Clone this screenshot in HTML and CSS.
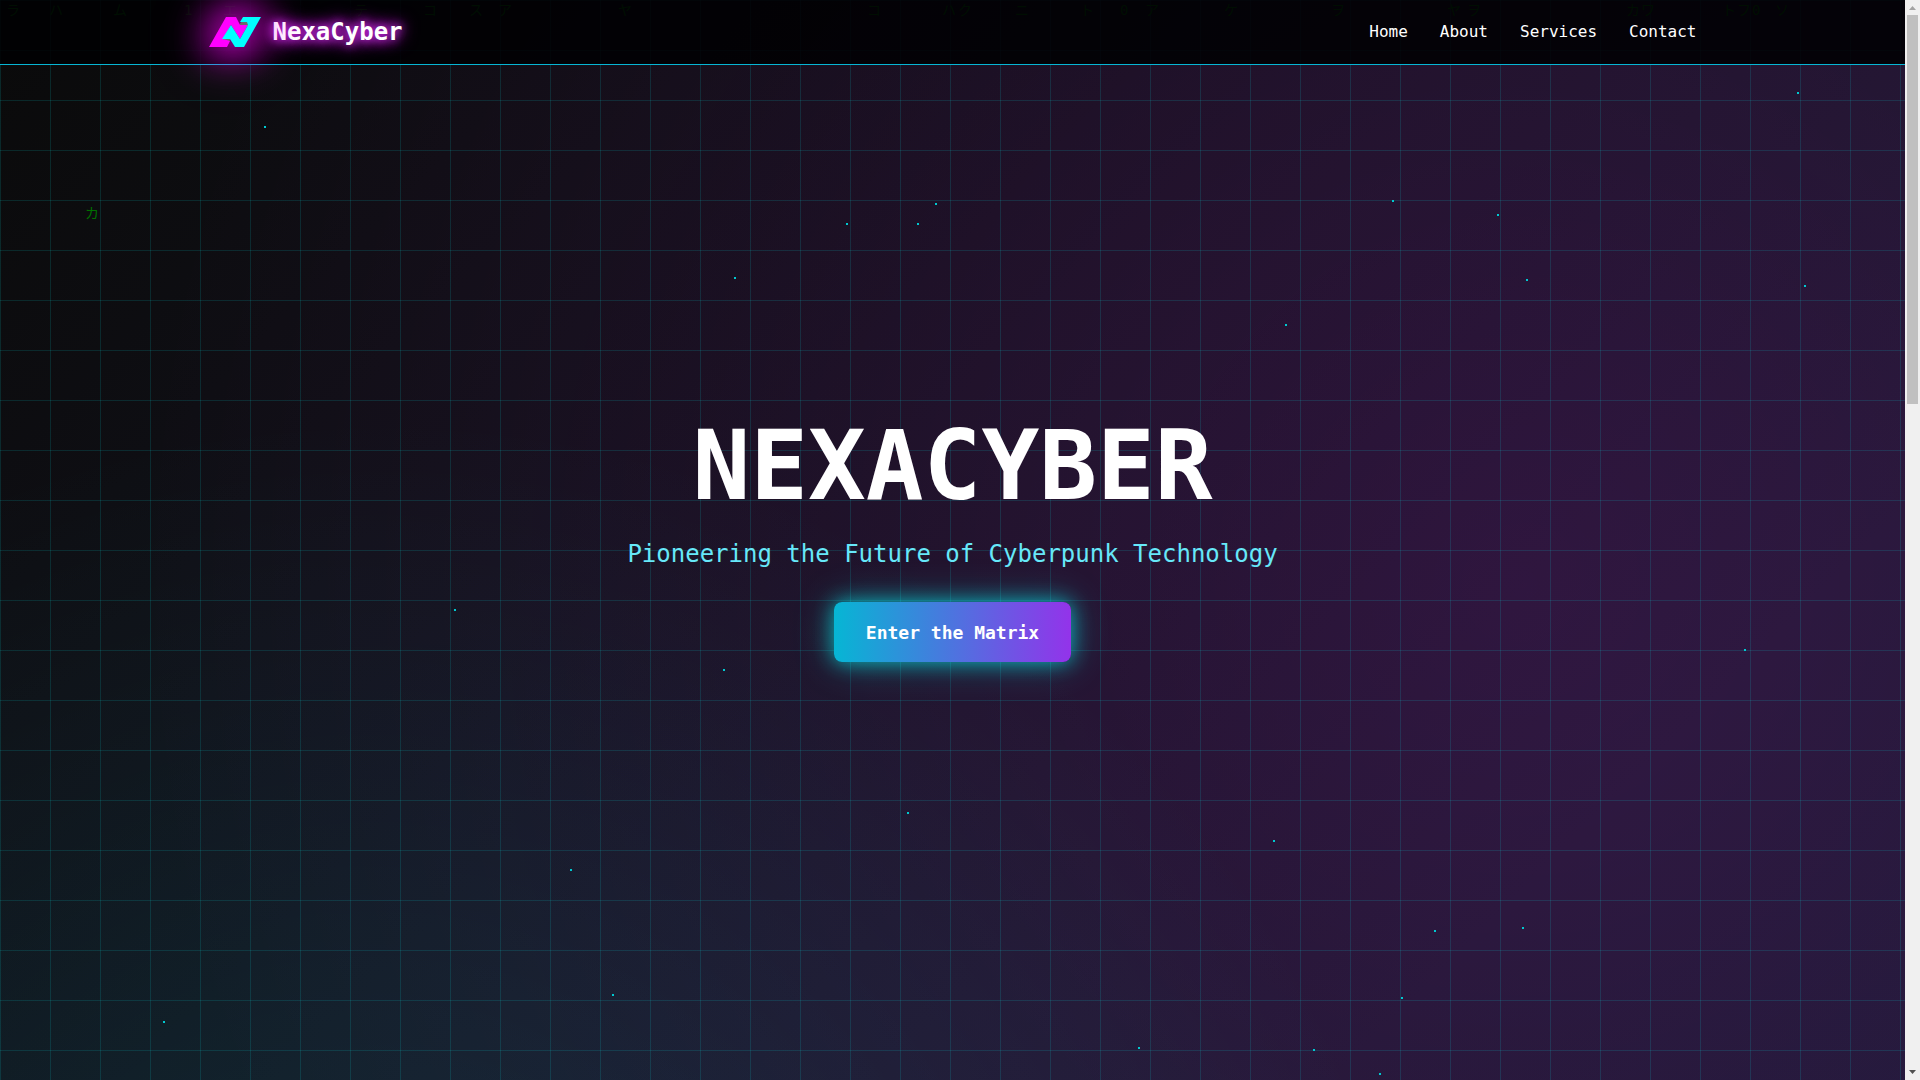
FILE: index.html
```html
<!DOCTYPE html>
<html lang="en">
<head>
    <meta charset="UTF-8">
    <meta name="viewport" content="width=device-width, initial-scale=1.0">
    <title>NexaCyber</title>
    <link rel="stylesheet" href="styles.css">
</head>
<body>
    <div class="page">
        <div class="cyber-grid"></div>
        <div class="matrix-rain" id="matrix-rain" aria-hidden="true"></div>
        <div class="particles" id="particles" aria-hidden="true"></div>

        <header class="navbar">
            <div class="nav-inner">
                <a class="brand" href="#home">
                    <svg class="logo" viewBox="0 0 52 30" aria-hidden="true">
                        <path fill="#6b6b6b" d="M30 8l3-4 7 1-1 4zM13 21l9 0-3 6z"/>
                        <path fill="#ff00ff" d="M0 30L17 0h10l4 8h8l-8 14-9-14-8 14 7 2-3 6z"/>
                        <path fill="#00ffff" d="M34 0h18L35 30h-9l-5-8h-8l9-14 9 14 8-14-1-3h-7z"/>
                    </svg>
                    <span class="brand-name">NexaCyber</span>
                </a>
                <nav class="nav-links">
                    <a href="#home">Home</a>
                    <a href="#about">About</a>
                    <a href="#services">Services</a>
                    <a href="#contact">Contact</a>
                </nav>
            </div>
        </header>

        <main class="hero" id="home">
            <h1>NEXACYBER</h1>
            <p class="tagline">Pioneering the Future of Cyberpunk Technology</p>
            <button class="enter-btn" type="button">Enter the Matrix</button>
        </main>
    </div>

    <div class="scrollbar" aria-hidden="true">
        <svg class="arrow" viewBox="0 0 15 15"><path fill="#a3a3a3" d="M4 10l3.500-4 3.500 4z"/></svg>
        <div class="track"><div class="thumb"></div></div>
        <svg class="arrow" viewBox="0 0 15 15"><path fill="#505050" d="M4 5l3.500 4L11 5z"/></svg>
    </div>

    <script src="script.js"></script>
</body>
</html>
```
FILE: styles.css
```css
* {
    margin: 0;
    padding: 0;
    box-sizing: border-box;
}

body {
    display: flex;
    height: 100vh;
    overflow: hidden;
    background: #0a0a0a;
    color: white;
    font-family: "DejaVu Sans Mono", "Noto Sans CJK JP", monospace;
}

.page {
    position: relative;
    flex: 1;
    display: flex;
    flex-direction: column;
    overflow: hidden;
    background:
        radial-gradient(circle at 20% 50%, rgba(0, 255, 255, 0.1) 0%, transparent 50%),
        radial-gradient(circle at 80% 20%, rgba(255, 0, 255, 0.1) 0%, transparent 50%),
        linear-gradient(135deg, #0a0a0a 0%, #1a1a2e 50%, #16213e 100%);
    background-size: 100% 271vh;
}

.cyber-grid,
.matrix-rain,
.particles {
    position: absolute;
    inset: 0;
}

.cyber-grid {
    background-image:
        linear-gradient(rgba(0, 255, 255, 0.12) 1px, transparent 1px),
        linear-gradient(90deg, rgba(0, 255, 255, 0.12) 1px, transparent 1px);
    background-size: 50px 50px;
}

.matrix-rain span {
    position: absolute;
    color: #007000;
    font-size: 14px;
    line-height: 16px;
}

.particles i {
    position: absolute;
    width: 2px;
    height: 2px;
    background: #00c8d0;
}

/* Navigation */
.navbar {
    position: absolute;
    top: 0;
    left: 0;
    right: 0;
    z-index: 10;
    background: rgba(0, 0, 2, 0.88);
    border-bottom: 1px solid #06b6d4;
}

.nav-inner {
    display: flex;
    align-items: center;
    justify-content: space-between;
    max-width: 1536px;
    height: 64px;
    margin: 0 auto;
    padding: 0 24px;
}

.brand {
    display: flex;
    align-items: center;
    gap: 12px;
    color: white;
    text-decoration: none;
}

.logo {
    width: 52px;
    height: 30px;
    filter: drop-shadow(0 0 20px #ff00ff) drop-shadow(0 0 20px rgba(255, 0, 255, 0.7));
    overflow: visible;
}

.brand-name {
    font-size: 24px;
    line-height: 32px;
    font-weight: bold;
    text-shadow: 0 0 10px #d028f0, 0 0 15px #c026d3, 0 0 20px #c026d3;
}

.nav-links {
    display: flex;
    gap: 32px;
}

.nav-links a {
    color: white;
    font-size: 16px;
    line-height: 24px;
    text-decoration: none;
}

/* Hero */
.hero {
    position: relative;
    flex: 1;
    display: flex;
    flex-direction: column;
    align-items: center;
    justify-content: center;
}

h1 {
    font-size: 96px;
    line-height: 96px;
    margin-bottom: 24px;
}

.tagline {
    color: #67e8f9;
    font-size: 24px;
    line-height: 32px;
    margin-bottom: 32px;
}

.enter-btn {
    height: 60px;
    padding: 0 32px;
    border: none;
    border-radius: 8px;
    background: linear-gradient(90deg, #06b6d4, #9333ea);
    box-shadow: 0 0 20px rgba(0, 255, 255, 0.6), 0 0 40px rgba(0, 255, 255, 0.3);
    color: white;
    font-family: inherit;
    font-size: 18px;
    font-weight: bold;
    cursor: pointer;
}

/* Scrollbar */
.scrollbar {
    display: flex;
    flex-direction: column;
    align-items: center;
    width: 15px;
    background: #f0f0f0;
}

.track {
    flex: 1;
    width: 11px;
}

.thumb {
    height: 37%;
    background: #c0c0c0;
}

.arrow {
    width: 15px;
    height: 15px;
}
```
FILE: script.js
```js
// x, y of each floating particle
const particles = [
    [264, 126], [1797, 92], [935, 203], [846, 223], [917, 223],
    [1392, 200], [1497, 214], [734, 277], [1526, 279], [1804, 285],
    [1285, 324], [454, 609], [723, 669], [1744, 649], [907, 812],
    [1273, 840], [570, 869], [1434, 930], [1522, 927], [1401, 997],
    [612, 994], [163, 1021], [1138, 1047], [1313, 1049], [1379, 1073]
];

// falling characters: x, y, glyph
const drops = [
    [85, 205, "カ"], [6, 2, "ラ"], [49, 2, "ハ"], [113, 2, "ム"], [184, 2, "1"],
    [223, 2, "エ"], [354, 2, "テ"], [423, 2, "コ"], [469, 2, "ス"], [498, 2, "ア"],
    [618, 2, "ヤ"], [867, 2, "コ"], [942, 2, "ハ"], [958, 2, "ク"], [1015, 2, "ニ"],
    [1080, 2, "ト"], [1120, 2, "0"], [1145, 2, "ア"], [1224, 2, "ケ"], [1331, 2, "ヲ"],
    [1447, 2, "ヤ"], [1467, 2, "ヲ"], [1626, 2, "カ"], [1641, 2, "ワ"], [1722, 2, "ト"],
    [1737, 2, "フ"], [1752, 2, "0"], [1775, 2, "ソ"]
];

function place(parent, tag, x, y, text) {
    const el = document.createElement(tag);
    el.style.left = x + "px";
    el.style.top = y + "px";
    el.textContent = text;
    parent.appendChild(el);
}

const particleBox = document.getElementById("particles");
particles.forEach(([x, y]) => place(particleBox, "i", x, y, ""));

const rain = document.getElementById("matrix-rain");
drops.forEach(([x, y, text]) => place(rain, "span", x, y, text));
```
